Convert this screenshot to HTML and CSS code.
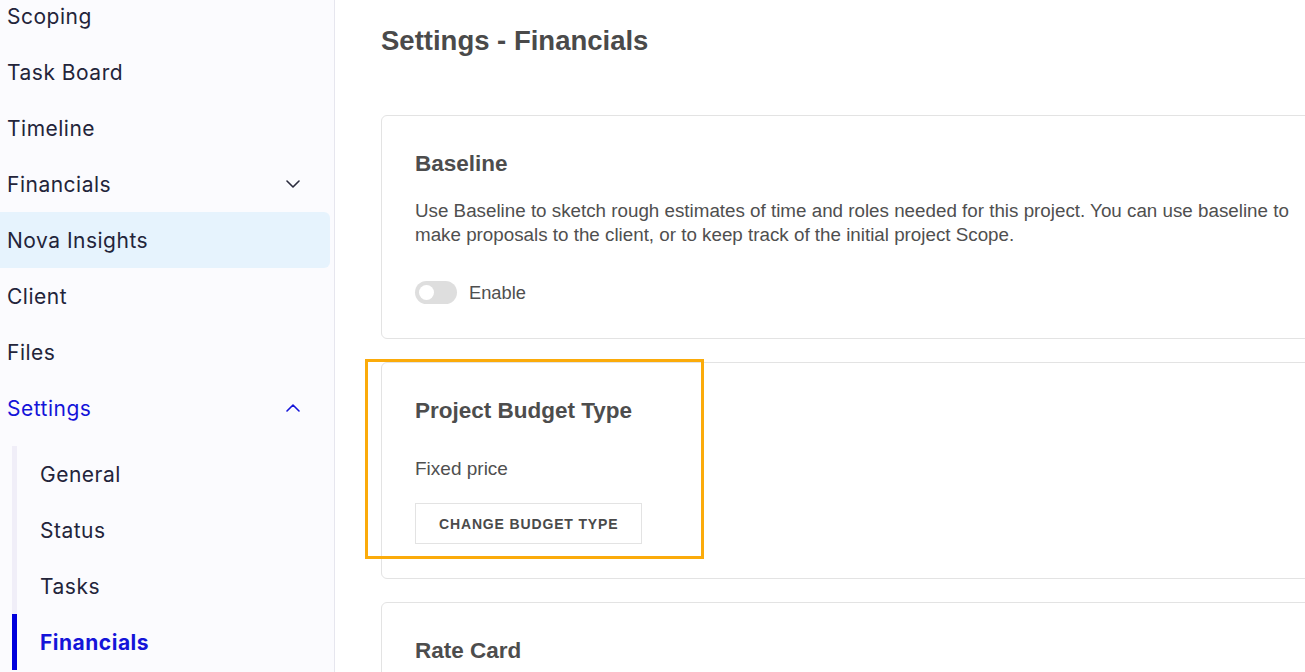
FILE: index.html
```html
<!DOCTYPE html>
<html lang="en">
<head>
<meta charset="utf-8">
<title>Settings - Financials</title>
<link rel="stylesheet" href="styles.css">
</head>
<body>
<aside class="sidebar">
  <nav class="nav">
    <div class="nav-item">Scoping</div>
    <div class="nav-item">Task Board</div>
    <div class="nav-item">Timeline</div>
    <div class="nav-item has-chevron">Financials
      <svg class="chev" width="14" height="8" viewBox="0 0 14 8"><path d="M1 1 L7 7 L13 1" fill="none" stroke="#2a2b3d" stroke-width="1.6" stroke-linecap="round" stroke-linejoin="round"/></svg>
    </div>
    <div class="nav-item highlighted">Nova Insights</div>
    <div class="nav-item">Client</div>
    <div class="nav-item">Files</div>
    <div class="nav-item has-chevron active">Settings
      <svg class="chev" width="14" height="8" viewBox="0 0 14 8"><path d="M1 7 L7 1 L13 7" fill="none" stroke="#1414d9" stroke-width="1.6" stroke-linecap="round" stroke-linejoin="round"/></svg>
    </div>
    <div class="subnav">
      <div class="sub-item">General</div>
      <div class="sub-item">Status</div>
      <div class="sub-item">Tasks</div>
      <div class="sub-item current">Financials</div>
    </div>
  </nav>
</aside>
<main class="main">
  <h1 class="page-title">Settings - Financials</h1>
  <section class="card">
    <h2 class="card-title">Baseline</h2>
    <p class="card-text">Use Baseline to sketch rough estimates of time and roles needed for this project. You can use baseline to make proposals to the client, or to keep track of the initial project Scope.</p>
    <div class="toggle-row">
      <span class="toggle"><span class="knob"></span></span>
      <span class="toggle-label">Enable</span>
    </div>
  </section>
  <section class="card">
    <div class="focus-ring"></div>
    <h2 class="card-title">Project Budget Type</h2>
    <p class="card-value">Fixed price</p>
    <button class="btn">CHANGE BUDGET TYPE</button>
  </section>
  <section class="card">
    <h2 class="card-title">Rate Card</h2>
  </section>
</main>
</body>
</html>
```
FILE: styles.css
```css
* { box-sizing: border-box; }
html, body { margin: 0; padding: 0; height: 100%; overflow: hidden; }
body {
  display: flex;
  background: #ffffff;
  font-family: "Liberation Sans", Arial, sans-serif;
}
.sidebar {
  width: 335px;
  flex-shrink: 0;
  height: 672px;
  background: #fbfbfe;
  border-right: 1px solid #e6e6ee;
  overflow: hidden;
}
.nav {
  margin-top: -12px;
  padding-right: 4px;
  font-family: Inter, "Noto Sans", sans-serif;
  font-size: 21px;
  letter-spacing: 0.5px;
  color: #23243a;
}
.nav-item {
  height: 56px;
  display: flex;
  align-items: center;
  justify-content: space-between;
  padding-left: 7px;
  padding-right: 30px;
}
.nav-item.highlighted {
  background: #e6f3fd;
  border-radius: 0 6px 6px 0;
}
.nav-item.active { color: #1414d9; }
.chev { display: block; }
.subnav {
  margin-top: 10px;
  margin-left: 12px;
}
.sub-item {
  height: 56px;
  display: flex;
  align-items: center;
  padding-left: 23px;
  border-left: 5px solid #f0eef8;
}
.sub-item.current {
  border-left-color: #0000dc;
  color: #1414d9;
  font-weight: 700;
}
.main {
  flex: 1;
  padding-left: 46px;
  overflow: hidden;
  color: #4d4d4d;
}
.page-title {
  margin: 24px 0 0 0;
  height: 34px;
  line-height: 34px;
  font-size: 27.5px;
  font-weight: 700;
  color: #4a4a4a;
}
.card {
  position: relative;
  width: 980px;
  margin-top: 57px;
  border: 1px solid #e3e3e3;
  border-radius: 6px;
  padding: 35px 34px 34px 33px;
  background: #fff;
}
.card + .card { margin-top: 23px; }
.card-title {
  margin: 0;
  font-size: 22.5px;
  line-height: 26px;
  font-weight: 700;
  color: #4d4d4d;
}
.card-text {
  margin: 22px 0 0 0;
  width: 900px;
  font-size: 18.8px;
  line-height: 24px;
  color: #4f4f4f;
}
.toggle-row {
  margin-top: 34px;
  display: flex;
  align-items: center;
  gap: 12px;
  height: 23px;
}
.toggle {
  width: 42px;
  height: 23px;
  border-radius: 12px;
  background: #dedede;
  display: flex;
  align-items: center;
  padding-left: 4px;
}
.knob {
  width: 15px;
  height: 15px;
  border-radius: 50%;
  background: #fff;
}
.toggle-label { font-size: 18.3px; color: #4f4f4f; }
.card-value {
  margin: 33px 0 0 0;
  font-size: 19px;
  line-height: 24px;
  color: #4f4f4f;
}
.btn {
  display: block;
  margin-top: 22px;
  height: 41px;
  padding: 0 23px;
  border: 1px solid #e3e3e3;
  background: #fff;
  font-family: "Liberation Sans", Arial, sans-serif;
  font-size: 14px;
  font-weight: 700;
  letter-spacing: 0.85px;
  color: #4a4a4a;
  border-radius: 0;
}
.focus-ring {
  position: absolute;
  left: -17px;
  top: -4px;
  width: 339px;
  height: 200px;
  border: 3px solid #fbab0a;
  pointer-events: none;
}
```
